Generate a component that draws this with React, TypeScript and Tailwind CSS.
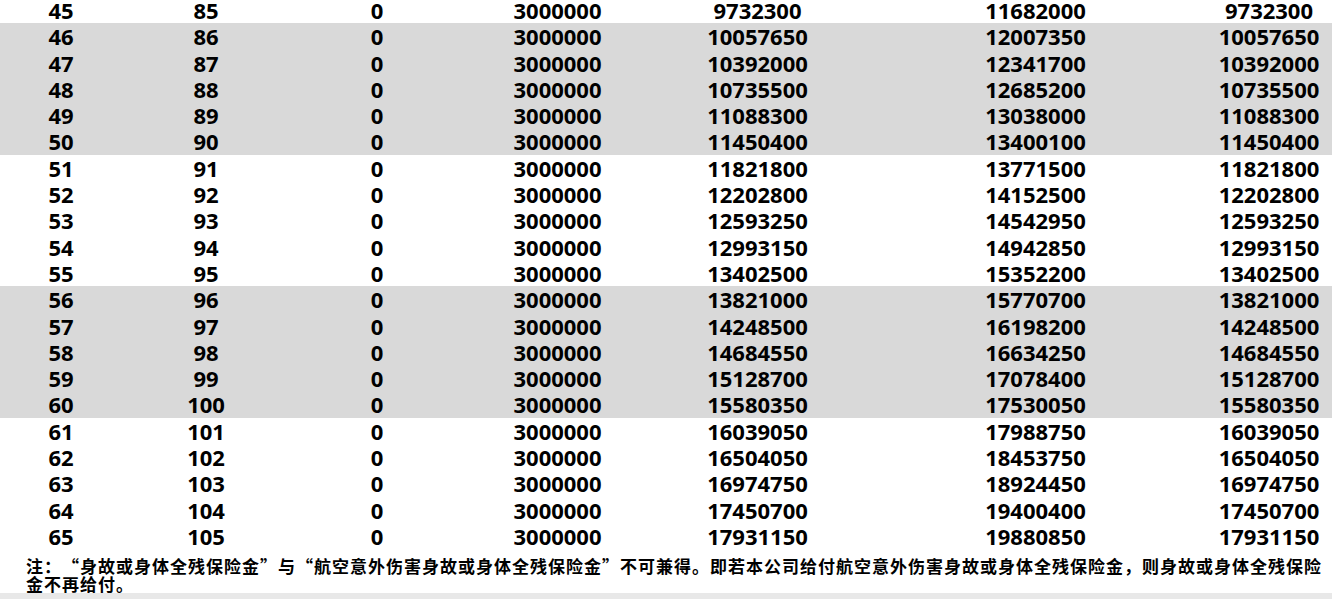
import React from 'react'

const ROWS: number[][] = [
  [45, 85, 0, 3000000, 9732300, 11682000, 9732300],
  [46, 86, 0, 3000000, 10057650, 12007350, 10057650],
  [47, 87, 0, 3000000, 10392000, 12341700, 10392000],
  [48, 88, 0, 3000000, 10735500, 12685200, 10735500],
  [49, 89, 0, 3000000, 11088300, 13038000, 11088300],
  [50, 90, 0, 3000000, 11450400, 13400100, 11450400],
  [51, 91, 0, 3000000, 11821800, 13771500, 11821800],
  [52, 92, 0, 3000000, 12202800, 14152500, 12202800],
  [53, 93, 0, 3000000, 12593250, 14542950, 12593250],
  [54, 94, 0, 3000000, 12993150, 14942850, 12993150],
  [55, 95, 0, 3000000, 13402500, 15352200, 13402500],
  [56, 96, 0, 3000000, 13821000, 15770700, 13821000],
  [57, 97, 0, 3000000, 14248500, 16198200, 14248500],
  [58, 98, 0, 3000000, 14684550, 16634250, 14684550],
  [59, 99, 0, 3000000, 15128700, 17078400, 15128700],
  [60, 100, 0, 3000000, 15580350, 17530050, 15580350],
  [61, 101, 0, 3000000, 16039050, 17988750, 16039050],
  [62, 102, 0, 3000000, 16504050, 18453750, 16504050],
  [63, 103, 0, 3000000, 16974750, 18924450, 16974750],
  [64, 104, 0, 3000000, 17450700, 19400400, 17450700],
  [65, 105, 0, 3000000, 17931150, 19880850, 17931150],
]

const COLS = ['w-[118px]', 'w-[172px]', 'w-[170px]', 'w-[191px]', 'w-[209px]', 'w-[347px]', 'w-[120px]']

// full-width quote cells, like the source document renders them
const Open = () => <span className="inline-block w-[18px] text-right">“</span>
const Close = () => <span className="inline-block w-[18px] text-left">”</span>

const App: React.FC = () => {
  return (
    <div className="w-[1332px] h-[599px] overflow-hidden bg-white text-black">
      <div className="-mt-[3px] font-['Open_Sans','Noto_Sans_CJK_SC',sans-serif] font-bold text-[22px] leading-[26.3px]">
        {ROWS.map((r) => {
          const shaded = Math.floor((r[0] - 46) / 5) % 2 === 0
          return (
            <div
              key={r[0]}
              className={`flex h-[26.3px] pl-[2px] ${shaded ? 'bg-[#d9d9d9]' : ''}`}
            >
              {r.map((v, i) => (
                <div key={i} className={`${COLS[i]} text-center`}>
                  {v}
                </div>
              ))}
            </div>
          )
        })}
      </div>

      <p
        lang="zh-CN"
        className="pl-[26px] pt-[8px] font-['Noto_Sans_CJK_SC',sans-serif] font-bold text-[17px] leading-[18px] tracking-[1px] [text-spacing-trim:space-all]"
      >
        注：<Open />身故或身体全残保险金<Close />与<Open />航空意外伤害身故或身体全残保险金<Close />
        不可兼得。即若本公司给付航空意外伤害身故或身体全残保险金，则身故或身体全残保险金不再给付。
      </p>
      <div className="h-[10px] bg-[#e8e8e8]"></div>
    </div>
  )
}

export default App
